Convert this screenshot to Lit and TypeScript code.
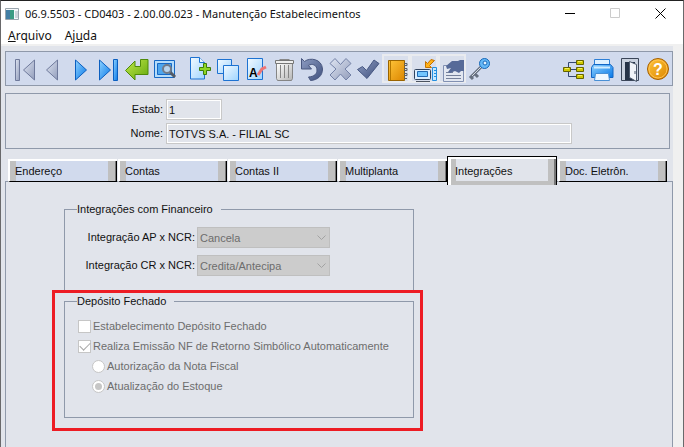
import { LitElement, html, svg, css } from "lit";
import { customElement, state } from "lit/decorators.js";

const icons: Record<string, unknown> = {
  first: svg`<path d="M4.5 4.5h4v21h-4z" fill="url(#gray)" stroke="#6f7a9c"/><path d="M23.500 5v20L12.500 15z" fill="url(#gray)" stroke="#6f7a9c"/>`,
  prev: svg`<path d="M18.500 5v20L7.500 15z" fill="url(#gray)" stroke="#6f7a9c"/>`,
  next: svg`<path d="M8.500 5v20L19.500 15z" fill="url(#blue)" stroke="#0b5fc0"/>`,
  last: svg`<path d="M4.500 5v20L15.500 15z" fill="url(#blue)" stroke="#0b5fc0"/><path d="M18.500 4.500h4v21h-4z" fill="url(#blue)" stroke="#0b5fc0"/>`,
  enter: svg`<path d="M2.500 15.500L12 6v5.500h5.500v-7h7.500v15H12V25z" fill="url(#green)" stroke="#4f8a0a"/>`,
  search: svg`<path d="M3.500 5.500h20v17h-20z" fill="#b5dcfa" stroke="#1668c5"/><path d="M6.500 8.500h14v11h-14z" fill="#4ea6ee" stroke="#1668c5"/><path d="M19 17l5 5" stroke="#555b66" stroke-width="3"/><circle cx="16" cy="14" r="4" fill="#b8d4ee" stroke="#737b88" stroke-width="2"/>`,
  add: svg`<path d="M4.500 2.500h9l5 5v16.500h-14z" fill="url(#paper)" stroke="#1d72d2"/><path d="M13.500 2.500v5h5" fill="#e9f6ff" stroke="#1d72d2"/><path d="M17.500 8.500h3v4h4v3h-4v4h-3v-4h-4v-3h4z" fill="#8ed625" stroke="#3e7d0a"/>`,
  copy: svg`<path d="M3.500 4.500h14v14h-14z" fill="url(#paper)" stroke="#1d72d2"/><path d="M9.500 10.500h15v15h-15z" fill="url(#paper)" stroke="#1d72d2"/>`,
  rename: svg`<path d="M5.500 3.500h15v21h-15z" fill="url(#paper)" stroke="#1d72d2"/><text x="7" y="22" font-family="Liberation Sans" font-size="12" font-weight="bold" fill="#000">A</text><path d="M16 20l4-6 4-2" fill="none" stroke="#ee7575" stroke-width="3"/>`,
  trash: svg`<path d="M6.500 8.500h16v15l-1 2h-14l-1-2z" fill="url(#metal)" stroke="#858585"/><path d="M5.500 5.500h18v3h-18z" fill="#eee" stroke="#777"/><path d="M9.500 4.500h10" stroke="#888"/><path d="M10.500 10v13M14.500 10v13M18.500 10v13" stroke="#858585"/>`,
  undo: svg`<path d="M3.500 3.500l3 3C12 2 24 4 24.500 14c0 7-5 11-12 11.500l-2-3.500c6-.5 8.500-3 8.500-7 0-5-5-7-8.500-4.500l3 3.500H3.500z" fill="url(#navy)" stroke="#4a5880"/>`,
  cancel: svg`<path d="M9 3.500l5.500 6 5.500-6 5 5-6 5.500 6 6-5 5-5.500-6-5.500 6-5-5 6-6-6-5.500z" fill="url(#gray)" stroke="#7381a6"/>`,
  confirm: svg`<path d="M3.500 14.500l5-3 4 4L20 5l5 3.500-12 15z" fill="url(#navy)" stroke="#465782"/>`,
  notebook: svg`<path d="M6.500 5.500h16v20h-16z" fill="url(#gold)" stroke="#9a6400"/><path d="M8.500 6v19" stroke="#b37600"/><path d="M22 8.500h3v2h-3M22 13.500h3v2h-3M22 18.500h3v2h-3M22 23.500h3" fill="none" stroke="#5b6068"/>`,
  monitor: svg`<path d="M22.500 12.500h4v13h-4z" fill="#c7e8ff" stroke="#238ee0"/><path d="M24 15.500h2M24 18.500h2M24 21.500h2" stroke="#238ee0"/><rect x="4.500" y="14.500" width="16" height="10" rx="1" fill="#dbeeff" stroke="#31445f"/><path d="M7.500 16.500h10v5h-10z" fill="#72c6ff" stroke="#236bb4"/><path d="M6 26.500h14" stroke="#4b5360"/><path d="M21 4.500l3.500 1-5 5 2 2h-6v-6l2 2z" fill="#ffb116" stroke="#c47200"/>`,
  contract: svg`<path d="M5.500 10.500h20v16h-20z" fill="#e2e7f1" stroke="#8190b2"/><path d="M8 17.500h7M8 20.500h15M8 23.500h15" stroke="#75809a"/><path d="M26 5v11h-3l-2 2-4-2-5 2-2-1 3-4-4 1-1-3 6-5h6l2-1z" fill="#566a98"/>`,
  key: svg`<path d="M15 12L5 22l2 2M9 19l3 3" fill="none" stroke="#667080" stroke-width="3"/><path d="M15 12L6 21" stroke="#d5dae1"/><circle cx="18.500" cy="8.500" r="5" fill="#65b8f7" stroke="#1768b8"/><circle cx="19" cy="8" r="2" fill="#e8f5ff" stroke="#1768b8"/>`,
  tree: svg`<path d="M10 14.500h7M8.500 14.500v-7H17M8.500 14.500v7H17" fill="none" stroke="#34476f"/><path d="M3.500 12.500h7v4h-7zM16.500 5.500h7v4h-7zM16.500 12.500h7v4h-7zM16.500 19.500h7v4h-7z" fill="#cfc800" stroke="#656400"/><path d="M5 13.500h4M18 6.500h4M18 13.500h4M18 20.500h4" stroke="#f4ef62"/>`,
  print: svg`<path d="M6.500 11V4.500h15V11" fill="#dff1ff" stroke="#2d7fd6"/><path d="M5.500 9.500h17l2.500 3v10H3.500v-10z" fill="url(#blue)" stroke="#1266c5"/><path d="M6 12.500h16" stroke="#d0ecff" stroke-width="2"/><path d="M7.500 18.500h13l1 7h-15z" fill="#f0f8ff" stroke="#4990d5"/>`,
  door: svg`<path d="M5.500 3.500h17v22h-17z" fill="#cad2df" stroke="#3b4659"/><path d="M9 7h10v18H9z" fill="#263347"/><path d="M13.500 9.500l7-3v16l-7 4z" fill="#f0f3f8" stroke="#4c596d" transform="translate(34 0) scale(-1 1)"/><path d="M19 16v3" stroke="#465368"/>`,
  help: svg`<circle cx="14" cy="14" r="10.500" fill="url(#gold)" stroke="#a65f00"/><circle cx="14" cy="14" r="9" fill="none" stroke="#ffc252"/><text x="14" y="20" text-anchor="middle" font-family="Liberation Sans" font-size="16" font-weight="bold" fill="#fff">?</text>`,
};

const toolGroups: { name: string; label: string; framed?: boolean }[][] = [
  [
    { name: "first", label: "Primeiro" },
    { name: "prev", label: "Anterior" },
    { name: "next", label: "Próximo" },
    { name: "last", label: "Último" },
    { name: "enter", label: "Vá para" },
    { name: "search", label: "Pesquisa" },
  ],
  [
    { name: "add", label: "Inclui" },
    { name: "copy", label: "Copia" },
    { name: "rename", label: "Modifica" },
    { name: "trash", label: "Elimina" },
    { name: "undo", label: "Desfaz" },
    { name: "cancel", label: "Cancela" },
    { name: "confirm", label: "Salva" },
    { name: "notebook", label: "Caderno", framed: true },
    { name: "monitor", label: "Configuração", framed: true },
    { name: "contract", label: "Contrato", framed: true },
    { name: "key", label: "Chave" },
  ],
  [
    { name: "tree", label: "Consultas relacionadas" },
    { name: "print", label: "Relatórios" },
    { name: "door", label: "Sair" },
    { name: "help", label: "Ajuda" },
  ],
];

const tabs = ["Endereço", "Contas", "Contas II", "Multiplanta", "Integrações", "Doc. Eletrôn."];

@customElement("tool-button")
class ToolButton extends LitElement {
  static properties = { name: {}, label: {}, framed: { type: Boolean } };
  declare name: string;
  declare label: string;
  declare framed: boolean;

  static styles = css`
    :host { display: block; flex: none; }
    .tool { display: block; width: 28px; height: 29px; padding: 0; border: 0; background: none; }
    .framed { background: #d9dfec; box-shadow: inset 0 0 0 2px #e9ebef; }
    .icon { display: block; width: 28px; height: 28px; }
  `;

  gradient(id: string, from: string, to: string) {
    return svg`<linearGradient id=${id} x1="0" y1="0" x2="1" y2="1"><stop offset="0" stop-color=${from}/><stop offset="1" stop-color=${to}/></linearGradient>`;
  }

  render() {
    return html`<button class="tool ${this.framed ? "framed" : ""}" aria-label=${this.label}>
      <svg class="icon" viewBox="0 0 28 28" aria-hidden="true">
        <defs>
          ${this.gradient("gray", "#dfe5f2", "#929dbb")}
          ${this.gradient("blue", "#8fd2ff", "#0878e8")}
          ${this.gradient("green", "#c2e84a", "#62a80d")}
          ${this.gradient("paper", "#f3faff", "#9fd4ff")}
          ${this.gradient("metal", "#ffffff", "#b5b5b5")}
          ${this.gradient("navy", "#8d9cc2", "#40517e")}
          ${this.gradient("gold", "#ffc53a", "#dc8600")}
        </defs>
        ${icons[this.name]}
      </svg>
    </button>`;
  }
}

@customElement("app-root")
class AppRoot extends LitElement {
  @state() active = 4;

  static styles = css`
    :host { display: block; font: 11px/16px "Liberation Sans", sans-serif; color: #111; }
    * { box-sizing: border-box; }
    button, input, select { font: inherit; color: inherit; margin: 0; }
    .window {
      min-height: 100vh; display: flex; flex-direction: column; background: #f0f0f0;
      border: 1px solid #69696b; border-top-color: #222; border-bottom: 0;
    }
    .caption { display: flex; align-items: center; height: 25px; padding-left: 4px; background: #fff; font-family: "Noto Sans", sans-serif; }
    .app-icon { flex: none; width: 14px; height: 12px; margin-right: 6px; }
    .title { flex: 1; margin: 0; font-size: 11px; font-weight: 400; white-space: nowrap; overflow: hidden; }
    .control { flex: none; width: 45px; height: 25px; padding: 0; border: 0; background: none; }
    .control svg { display: block; margin: 0 auto; }
    .menu { display: flex; gap: 13px; height: 18px; padding: 0 7px; background: #fff; font-family: "Noto Sans", sans-serif; font-size: 12px; }
    .menu button { padding: 1px 0 0; border: 0; background: none; line-height: 18px; }
    .client { flex: 1; display: flex; flex-direction: column; margin: 2px 10px 0 0; padding: 5px 0 0 4px; background: #e1e4eb; }
    .toolbar { display: flex; padding: 2px 0 2px 5px; border: 1px solid #8f99aa; background: #d1daed; }
    .tools { display: flex; }
    .tools + .tools { margin-left: 7px; }
    .tools:last-child { margin-left: auto; }
    .record {
      display: grid; grid-template-columns: 157px minmax(0, 406px); column-gap: 3px; row-gap: 3px;
      margin: 7px 3px 0 0; padding: 5px 0 4px; border: 1px solid #8f99aa;
    }
    .record label { text-align: right; line-height: 21px; }
    .field { width: 100%; height: 21px; padding: 0 2px; border: 1px solid #c8c8c8; outline: 1px solid #fff; outline-offset: -2px; background: transparent; }
    .short { width: 56px; }
    .tabs { display: flex; align-items: flex-start; margin: 7px 0 0 3px; height: 25px; position: relative; }
    .tab {
      flex: none; width: 109px; height: 23px; margin: 3px 1px 0 0; padding: 0 0 0 5px; text-align: left; line-height: 20px;
      border: solid #fff; border-width: 2px 0 0 2px; background: #d1daed;
      border-bottom: 1px solid #000; box-shadow: inset -1px 0 #000, inset -2px 0 #777, inset -9px 0 #c0c0c0, inset 6px 0 #c0c0c0;
    }
    .tab.selected {
      width: 110px; height: 29px; margin: 0 1px 0 -1px; padding: 0 0 0 7px; background: #e1e4eb;
      border: solid #000; border-width: 1px 1px 0;
      box-shadow: inset 3px 2px #fff, inset -2px 0 #777, inset -8px 0 #c0c0c0, inset 8px -4px #c0c0c0;
    }
    .page { flex: 1; border: 1px solid #8f99aa; border-bottom: 0; padding: 19px 0 16px 46px; }
    .groups { width: 371px; max-width: 100%; }
    .group { min-width: 0; margin: 0; padding: 0 0 0 12px; border: 1px solid #8f99aa; }
    .group legend { padding: 0 8px 0 0; }
    .finance { margin: 0 9px 0 12px; padding-bottom: 14px; border-bottom: 0; }
    .choice { display: grid; grid-template-columns: 118px 133px; column-gap: 2px; height: 21px; margin-top: 7px; }
    .choice:first-of-type { margin-top: 10px; }
    .choice label { text-align: right; line-height: 21px; white-space: nowrap; }
    .drop { display: grid; align-items: center; }
    .drop > * { grid-area: 1 / 1; }
    .drop select { appearance: none; height: 21px; padding: 0 2px; border: 1px solid #bfbfbf; border-radius: 0; background: #ccc; color: #6d6d6d; opacity: 1; }
    .drop svg { justify-self: end; margin-right: 4px; pointer-events: none; }
    .marked { border: 3px solid #ed1c24; padding: 0 6px 10px 9px; }
    .deposit { padding: 0 0 21px 13px; }
    .deposit legend { margin-left: -1px; }
    .option { display: flex; align-items: center; gap: 2px; height: 20px; color: #6d6d6d; white-space: nowrap; }
    .option:first-of-type { margin-top: 7px; }
    .option.nested { padding-left: 14px; }
    .option input { appearance: none; flex: none; display: grid; place-items: center; width: 13px; height: 13px; border: 1px solid #c6c6c6; background: #fff; }
    .option input[type="radio"] { border-radius: 50%; }
    .option input[type="radio"]:checked::before { content: ""; width: 7px; height: 7px; border-radius: 50%; background: #c6c6c6; }
    .option input[type="checkbox"]:checked::before { content: ""; width: 9px; height: 5px; border: solid #a8a8a8; border-width: 0 0 1px 1px; transform: rotate(-45deg); margin-bottom: 3px; }
  `;

  choice(id: string, label: string, value: string) {
    return html`<div class="choice">
      <label for=${id}>${label}</label>
      <div class="drop">
        <select id=${id} disabled><option>${value}</option></select>
        <svg width="9" height="6" viewBox="0 0 9 6" aria-hidden="true"><path d="M.5.500l4 4 4-4" fill="none" stroke="#a3a3a3"/></svg>
      </div>
    </div>`;
  }

  render() {
    return html`<div class="window">
      <header class="caption">
        <svg class="app-icon" viewBox="0 0 14 12" aria-hidden="true">
          <path d="M.5.500h13v11H.5z" fill="#f5f8fa" stroke="#9aa5ad"/><path d="M1 2h8v9H1z" fill="#3c9b83"/><path d="M1 2h4v9H1z" fill="#427fa5"/><path d="M10 3h3v7h-3z" fill="#cdd5da"/>
        </svg>
        <h1 class="title">06.9.5503 - CD0403 - 2.00.00.023 - Manutenção Estabelecimentos</h1>
        <button class="control" aria-label="Minimizar"><svg width="11" height="11"><path d="M0 5.500h10" stroke="#000"/></svg></button>
        <button class="control" aria-label="Maximizar" disabled><svg width="11" height="11"><path d="M.5.500h9v9h-9z" fill="none" stroke="#ccc"/></svg></button>
        <button class="control" aria-label="Fechar"><svg width="11" height="11"><path d="M.5.500l10 10M10.500.500l-10 10" stroke="#000"/></svg></button>
      </header>
      <nav class="menu">
        <button><u>A</u>rquivo</button>
        <button>Aj<u>u</u>da</button>
      </nav>
      <main class="client">
        <div class="toolbar" role="toolbar">
          ${toolGroups.map((group) => html`<div class="tools">
            ${group.map((t) => html`<tool-button .name=${t.name} .label=${t.label} .framed=${!!t.framed}></tool-button>`)}
          </div>`)}
        </div>
        <section class="record">
          <label for="estab">Estab:</label><input id="estab" class="field short" value="1" readonly>
          <label for="nome">Nome:</label><input id="nome" class="field" value="TOTVS S.A. - FILIAL SC" readonly>
        </section>
        <div class="tabs" role="tablist">
          ${tabs.map((t, i) => html`<button role="tab" class="tab ${i === this.active ? "selected" : ""}"
            aria-selected=${i === this.active} @click=${() => (this.active = i)}>${t}</button>`)}
        </div>
        <section class="page" role="tabpanel">
          <div class="groups">
            <fieldset class="group finance">
              <legend>Integrações com Financeiro</legend>
              ${this.choice("ap", "Integração AP x NCR:", "Cancela")}
              ${this.choice("cr", "Integração CR x NCR:", "Credita/Antecipa")}
            </fieldset>
            <div class="marked">
              <fieldset class="group deposit">
                <legend>Depósito Fechado</legend>
                <label class="option"><input type="checkbox" disabled>Estabelecimento Depósito Fechado</label>
                <label class="option"><input type="checkbox" checked disabled>Realiza Emissão NF de Retorno Simbólico Automaticamente</label>
                <label class="option nested"><input type="radio" name="when" disabled>Autorização da Nota Fiscal</label>
                <label class="option nested"><input type="radio" name="when" checked disabled>Atualização do Estoque</label>
              </fieldset>
            </div>
          </div>
        </section>
      </main>
    </div>`;
  }
}
